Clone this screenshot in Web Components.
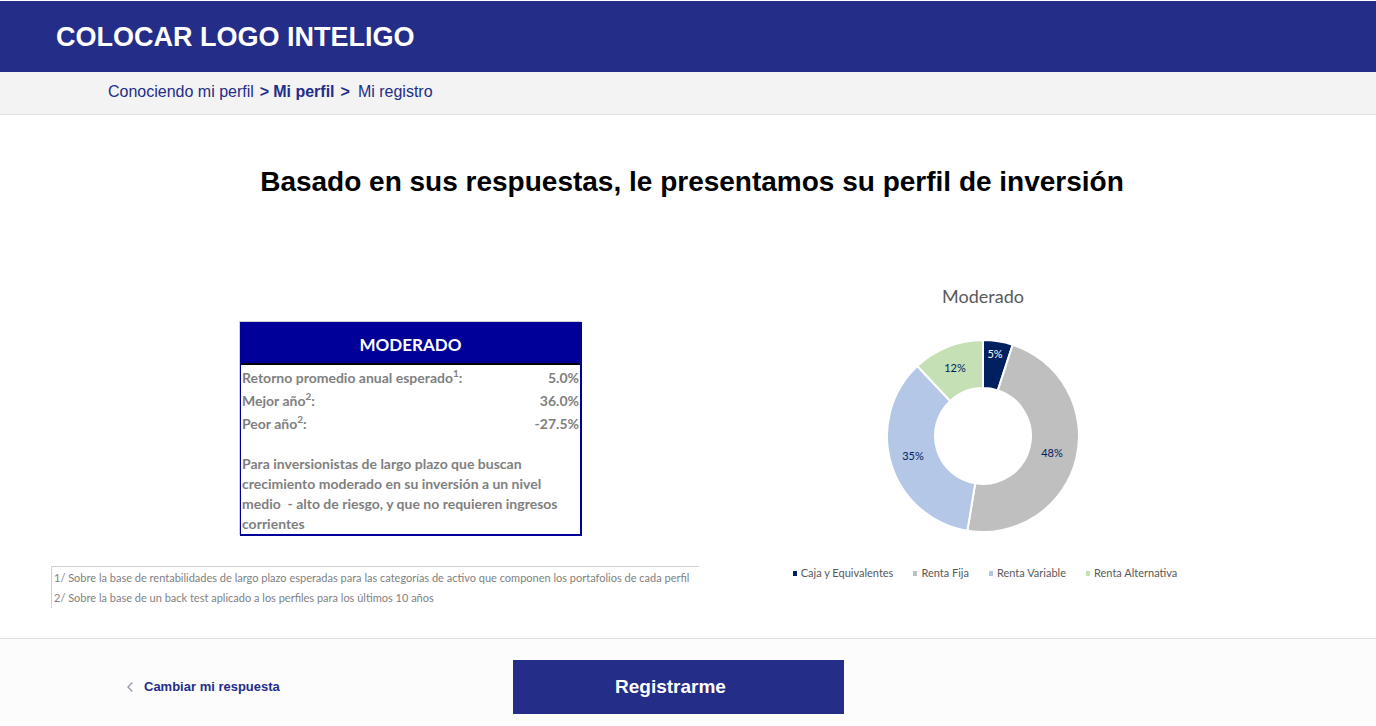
<!DOCTYPE html>
<html lang="es">
<head>
<meta charset="utf-8">
<meta name="viewport" content="width=device-width, initial-scale=1">
<title>Mi perfil de inversión</title>
<style>
  html { background: #fff; }
  body {
    margin: 0;
    padding-top: 1px;
    font-family: "Liberation Sans", Arial, sans-serif;
    --brand: #242d88;
    --office-font: Lato, Calibri, sans-serif;
  }
</style>
</head>
<body>
<profile-page></profile-page>

<script>
const define = (name, html, setup) => {
  const template = document.createElement('template');
  template.innerHTML = html;
  customElements.define(name, class extends HTMLElement {
    constructor() {
      super();
      this.attachShadow({ mode: 'open' }).append(template.content.cloneNode(true));
    }
    connectedCallback() {
      if (setup) setup(this, this.shadowRoot);
    }
  });
};

define('site-header', `
  <style>
    :host { display: block; background: var(--brand); color: #fff; padding: 20px 56px 19px; }
    .logo { font-size: 27px; line-height: 32px; font-weight: bold; }
  </style>
  <div class="logo"><slot></slot></div>
`);

define('step-trail', `
  <style>
    :host { display: block; background: #f3f3f3; border-bottom: 1px solid #e0e0e0; padding: 10px 108px 12px; }
    ol { display: flex; margin: 0; padding: 0; list-style: none; font-size: 16px; line-height: 20px; color: var(--brand); }
    a { color: inherit; text-decoration: none; }
    .current, .sep { font-weight: bold; }
    .sep { margin: 0 4px 0 6px; }
    .wide { margin-right: 8px; }
  </style>
  <nav aria-label="Pasos">
    <ol>
      <li><a href="#conociendo">Conociendo mi perfil</a></li>
      <li class="sep" aria-hidden="true">&gt;</li>
      <li class="current"><a href="#perfil" aria-current="step">Mi perfil</a></li>
      <li class="sep wide" aria-hidden="true">&gt;</li>
      <li><a href="#registro">Mi registro</a></li>
    </ol>
  </nav>
`);

define('profile-table', `
  <style>
    :host { display: block; font-family: var(--office-font); font-weight: bold; font-size: 14px; color: #7f7f7f; }
    table {
      width: 100%; border-spacing: 0; border: solid #000099; border-width: 0 2px 2px 1px;
      box-shadow: -1px -1px 0 #d0d0d0;
    }
    th, td { padding: 0 1px; line-height: 23px; text-align: left; }
    thead th {
      background: #000099; color: #fff; font-size: 17px; line-height: 24px; padding: 11px 0 6px;
      text-align: center; border-bottom: 2px solid #000;
    }
    tbody td { text-align: right; }
    tbody tr:first-child > * { padding-top: 1px; }
    tfoot td { line-height: 20px; padding: 19px 1px 0; white-space: pre-line; }
    sup { font-size: 10px; line-height: 0; vertical-align: 6px; }
  </style>
  <table>
    <thead><tr><th colspan="2" scope="colgroup">MODERADO</th></tr></thead>
    <tbody>
      <tr><th scope="row">Retorno promedio anual esperado<sup>1</sup>:</th><td>5.0%</td></tr>
      <tr><th scope="row">Mejor año<sup>2</sup>:</th><td>36.0%</td></tr>
      <tr><th scope="row">Peor año<sup>2</sup>:</th><td>-27.5%</td></tr>
    </tbody>
    <tfoot><tr><td colspan="2">Para inversionistas de largo plazo que buscan
crecimiento moderado en su inversión a un nivel
medio&nbsp; - alto de riesgo, y que no requieren ingresos
corrientes</td></tr></tfoot>
  </table>
`);

define('foot-notes', `
  <style>
    :host {
      display: block; border: solid #d0d0d0; border-width: 1px 0 0 1px; padding: 1px 2px 0;
      font-family: var(--office-font); font-size: 11px; line-height: 20px; color: #7f7f7f;
    }
    p { margin: 0; }
  </style>
  <p>1/ Sobre la base de rentabilidades de largo plazo esperadas para las categorías de activo que componen los portafolios de cada perfil</p>
  <p>2/ Sobre la base de un back test aplicado a los perfiles para los últimos 10 años</p>
`);

define('donut-chart', `
  <style>
    :host { display: flex; flex-direction: column; align-items: center; font-family: var(--office-font); color: #595959; }
    h2 { margin: 0; font-size: 18px; line-height: 24px; font-weight: normal; }
    svg { display: block; width: 194px; height: 194px; margin: 31px 0 30px; }
    path { stroke: #fff; stroke-width: 2; stroke-linejoin: round; }
    text { font-size: 11px; text-anchor: middle; }
    ul { display: flex; gap: 20px; margin: 0; padding: 0 0 0 4px; list-style: none; font-size: 11px; line-height: 20px; white-space: nowrap; }
    li { display: flex; align-items: center; gap: 4px; }
    li::before { content: ""; width: 4px; height: 5px; background: var(--key); }
  </style>
  <h2>Moderado</h2>
  <svg viewBox="-97 -97 194 194" role="img" aria-label="Distribución del perfil Moderado"></svg>
  <ul></ul>
`, (host, root) => {
  const slices = [
    { name: 'Caja y Equivalentes', label: '5%', share: 5, fill: '#002060', ink: '#fff', at: [12, -78] },
    { name: 'Renta Fija', label: '48%', share: 47.6, fill: '#bfbfbf', ink: '#002060', at: [69, 21] },
    { name: 'Renta Variable', label: '35%', share: 35.4, fill: '#b4c7e7', ink: '#002060', at: [-70, 24] },
    { name: 'Renta Alternativa', label: '12%', share: 12, fill: '#c5e0b4', ink: '#002060', at: [-28, -64] }
  ];
  const svg = root.querySelector('svg');
  const list = root.querySelector('ul');
  const outer = 96, inner = 48;
  const point = (radius, share) => {
    const a = share / 100 * 2 * Math.PI;
    return (radius * Math.sin(a)).toFixed(2) + ' ' + (-radius * Math.cos(a)).toFixed(2);
  };
  const make = (tag, attrs, text) => {
    const node = document.createElementNS('http://www.w3.org/2000/svg', tag);
    for (const key in attrs) node.setAttribute(key, attrs[key]);
    if (text) node.textContent = text;
    svg.append(node);
  };
  let from = 0;
  for (const s of slices) {
    const to = from + s.share;
    make('path', {
      fill: s.fill,
      d: `M${point(outer, from)}A${outer} ${outer} 0 0 1 ${point(outer, to)}L${point(inner, to)}A${inner} ${inner} 0 0 0 ${point(inner, from)}Z`
    });
    from = to;
    const item = document.createElement('li');
    item.style.setProperty('--key', s.fill);
    item.textContent = s.name;
    list.append(item);
  }
  for (const s of slices) make('text', { x: s.at[0], y: s.at[1], fill: s.ink }, s.label);
});

define('action-bar', `
  <style>
    :host {
      display: grid; grid-template-columns: 386fr 331fr 405fr; align-items: center;
      background: #fcfcfc; border-top: 1px solid #e0e0e0; padding: 21px 127px 9px;
    }
    a {
      display: flex; align-items: center; gap: 11px; color: var(--brand); text-decoration: none;
      font-size: 13px; line-height: 20px; font-weight: bold;
    }
    svg { width: 6px; height: 10px; fill: none; stroke: #9a9db0; stroke-width: 1.4; }
    button {
      border: 0; border-radius: 0; background: var(--brand); color: #fff; padding: 15px 16px 15px 0;
      font: bold 19px/24px "Liberation Sans", Arial, sans-serif;
    }
  </style>
  <a href="#conociendo">
    <svg viewBox="0 0 6 10" aria-hidden="true"><path d="M5.300 .5 1 5l4.300 4.500"/></svg>
    <span>Cambiar mi respuesta</span>
  </a>
  <button type="button">Registrarme</button>
`);

define('profile-page', `
  <style>
    :host { display: block; }
    main { padding: 49px 109px 30px 51px; }
    h1 { margin: 0 0 84px; padding-left: 66px; text-align: center; font-size: 28px; line-height: 36px; font-weight: bold; color: #000; }
    .columns { display: grid; grid-template-columns: 648fr 568fr; }
    .summary { display: flex; flex-direction: column; padding-top: 38px; gap: 30px; }
    profile-table { width: 342px; margin-left: 189px; }
  </style>
  <site-header>COLOCAR LOGO INTELIGO</site-header>
  <step-trail></step-trail>
  <main>
    <h1>Basado en sus respuestas, le presentamos su perfil de inversión</h1>
    <div class="columns">
      <section class="summary">
        <profile-table></profile-table>
        <foot-notes></foot-notes>
      </section>
      <donut-chart></donut-chart>
    </div>
  </main>
  <action-bar></action-bar>
`);
</script>
</body>
</html>
